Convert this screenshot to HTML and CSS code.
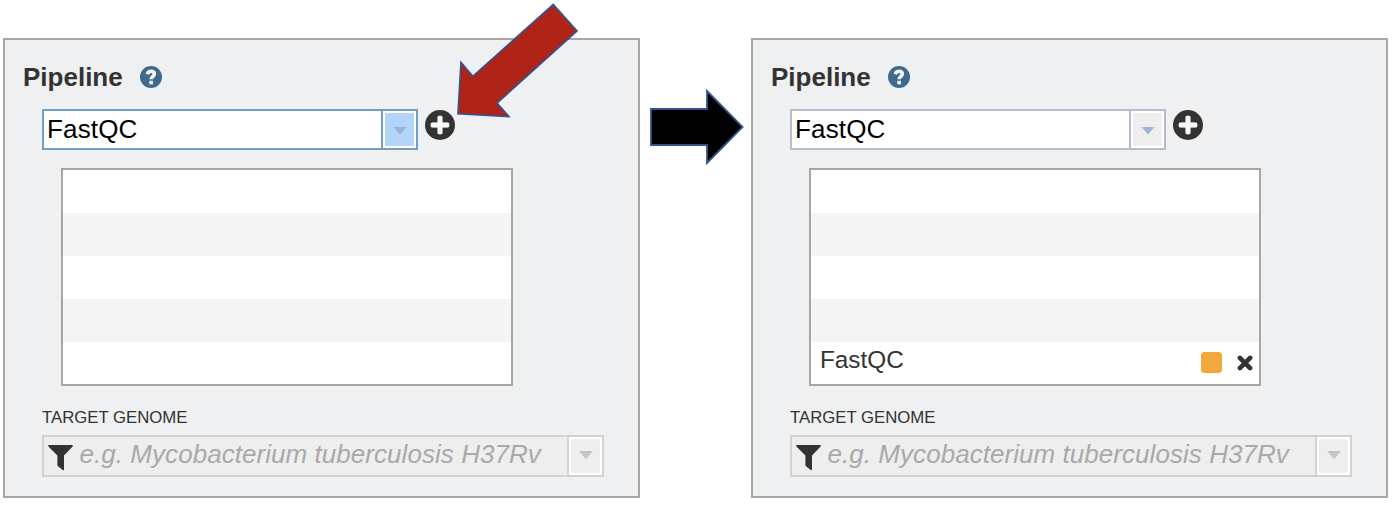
FILE: index.html
```html
<!DOCTYPE html>
<html lang="en">
<head>
<meta charset="utf-8">
<title>Pipeline</title>
<link rel="stylesheet" href="styles.css">
</head>
<body>
<svg class="defs" width="0" height="0" aria-hidden="true">
  <symbol id="help" viewBox="0 0 22 22">
    <circle cx="11" cy="11" r="11" fill="#40698c"/>
    <path d="M7.3 8.2C8 6.1 9.3 5.3 11.1 5.3C13.1 5.3 14.3 6.5 14.3 8.1C14.3 10.5 11.2 10.2 11.2 13.3" fill="none" stroke="#f3f5f7" stroke-width="3.6"/>
    <rect x="9.3" y="14.8" width="3.7" height="3.5" fill="#f3f5f7"/>
  </symbol>
  <symbol id="plus" viewBox="0 0 30 30">
    <circle cx="15" cy="15" r="15" fill="#333"/>
    <path d="M15 8V22M8 15H22" stroke="#f5f6f7" stroke-width="5" stroke-linecap="round" fill="none"/>
    <path d="M15 6V24M6 15H24" stroke="#f5f6f7" stroke-width="4.4" fill="none"/>
  </symbol>
  <symbol id="filter" viewBox="0 0 25 26">
    <path d="M.6 0H24.4Q25.3 .7 24.6 1.6L16 10.6V24.8Q15.6 25.6 14.7 25.1L10 21.2Q9.4 20.7 9.4 20V10.6L.4 1.6Q-.3 .7 .6 0Z" fill="#333"/>
  </symbol>
  <symbol id="close" viewBox="0 0 16 16">
    <path d="M2.9 2.9L13.1 13.1M13.1 2.9L2.9 13.1" stroke="#333" stroke-width="4.7" stroke-linecap="round"/>
  </symbol>
</svg>
<main class="stage">
  <section class="panel">
    <h2 class="title">Pipeline <svg class="help"><use href="#help"/></svg></h2>
    <div class="picker">
      <div class="combo active"><span class="value">FastQC</span><span class="drop"><i class="caret"></i></span></div>
      <svg class="plus"><use href="#plus"/></svg>
    </div>
    <div class="list"><div class="row"></div><div class="row"></div><div class="row"></div><div class="row"></div><div class="row"></div></div>
    <div class="label">TARGET GENOME</div>
    <div class="combo disabled"><svg class="filter"><use href="#filter"/></svg><span class="hint">e.g. Mycobacterium tuberculosis H37Rv</span><span class="drop"><i class="caret"></i></span></div>
  </section>
  <svg class="next" viewBox="650 88 94 78"><path d="M651 109H707V91L742.6 127L707 163V145H651Z" fill="#000" stroke="#34528d" stroke-width="1.8"/></svg>
  <section class="panel">
    <h2 class="title">Pipeline <svg class="help"><use href="#help"/></svg></h2>
    <div class="picker">
      <div class="combo"><span class="value">FastQC</span><span class="drop"><i class="caret"></i></span></div>
      <svg class="plus"><use href="#plus"/></svg>
    </div>
    <div class="list"><div class="row"></div><div class="row"></div><div class="row"></div><div class="row"></div><div class="row"><span class="name">FastQC</span><span class="swatch"></span><svg class="close"><use href="#close"/></svg></div></div>
    <div class="label">TARGET GENOME</div>
    <div class="combo disabled"><svg class="filter"><use href="#filter"/></svg><span class="hint">e.g. Mycobacterium tuberculosis H37Rv</span><span class="drop"><i class="caret"></i></span></div>
  </section>
  <svg class="pointer" viewBox="450 0 134 124"><path d="M553.3 4.5L577 31L497 103L508.8 116.5L458 113.8L461 62.5L472.8 76.3Z" fill="#b02418" stroke="#34528d" stroke-width="1.7"/></svg>
</main>
</body>
</html>
```
FILE: styles.css
```css
* { box-sizing: border-box; }
body { margin: 0; background: #fff; font-family: "Liberation Sans", Arial, sans-serif; color: #333; }
.defs { display: none; }
.stage { position: relative; display: flex; align-items: flex-start; width: 1398px; height: 506px; padding: 38px 0 0 3px; overflow: hidden; }
.panel { flex: none; width: 637px; height: 460px; padding: 22px 0 0 37px; border: 2px solid #a6a6a6; background: #eff0f2; }
.title { display: flex; align-items: center; gap: 17px; height: 30px; margin: 0 0 17px -19px; font-size: 26px; line-height: 30px; }
.help { width: 22px; height: 22px; }
.picker { display: flex; gap: 7px; }
.plus { width: 30px; height: 30px; margin-top: 1px; }
.combo { display: flex; width: 376px; height: 41px; border: 2px solid #b5bccb; background: #fff; font-size: 26px; }
.value { flex: 1; padding: 3px 0 0 3px; line-height: 30px; letter-spacing: .15px; color: #000; }
.drop { display: flex; align-items: center; justify-content: center; width: 35px; border-left: 2px solid #b5bccb; background: #eee; box-shadow: inset 0 0 0 2px #fff; }
.caret { width: 14px; height: 8px; margin: 2px 0 0 1px; background: #a2b3d5; clip-path: polygon(0 0, 100% 0, 50% 100%); }
.active, .active .drop { border-color: #769dc0; }
.active .drop { background: #b2d5fb; }
.active .caret { background: #a0b0cc; }
.list { width: 452px; height: 218px; margin: 18px 0 0 19px; border: 2px solid #a6a6a6; background: #fff; }
.row { display: flex; align-items: center; height: 43px; }
.row:nth-child(even) { background: #f4f4f4; }
.name { flex: 1; padding-left: 9px; margin-top: -7px; font-size: 24.3px; line-height: 30px; }
.swatch { width: 21px; height: 21px; margin: -2px 15px 0 0; border-radius: 3.5px; background: #f2a83b; }
.close { width: 16px; height: 16px; margin: -2px 6px 0 0; }
.label { margin: 22px 0 7px; font-size: 16.75px; line-height: 20px; }
.disabled { width: 562px; height: 42px; border-color: #d2d2d2; background: #eee; }
.filter { width: 25px; height: 26px; margin: 7.5px 0 0 3.5px; }
.hint { flex: 1; padding-left: 7px; line-height: 34px; letter-spacing: .05px; font-style: italic; color: #a9a9a9; white-space: nowrap; }
.disabled .drop { width: 35px; border-color: #d2d2d2; }
.disabled .caret { margin-top: -2px; background: #c3c3c3; }
.next { flex: none; width: 94px; height: 78px; margin: 50px 7px 0 10px; }
.pointer { position: absolute; left: 450px; top: 0; width: 134px; height: 124px; }
```
